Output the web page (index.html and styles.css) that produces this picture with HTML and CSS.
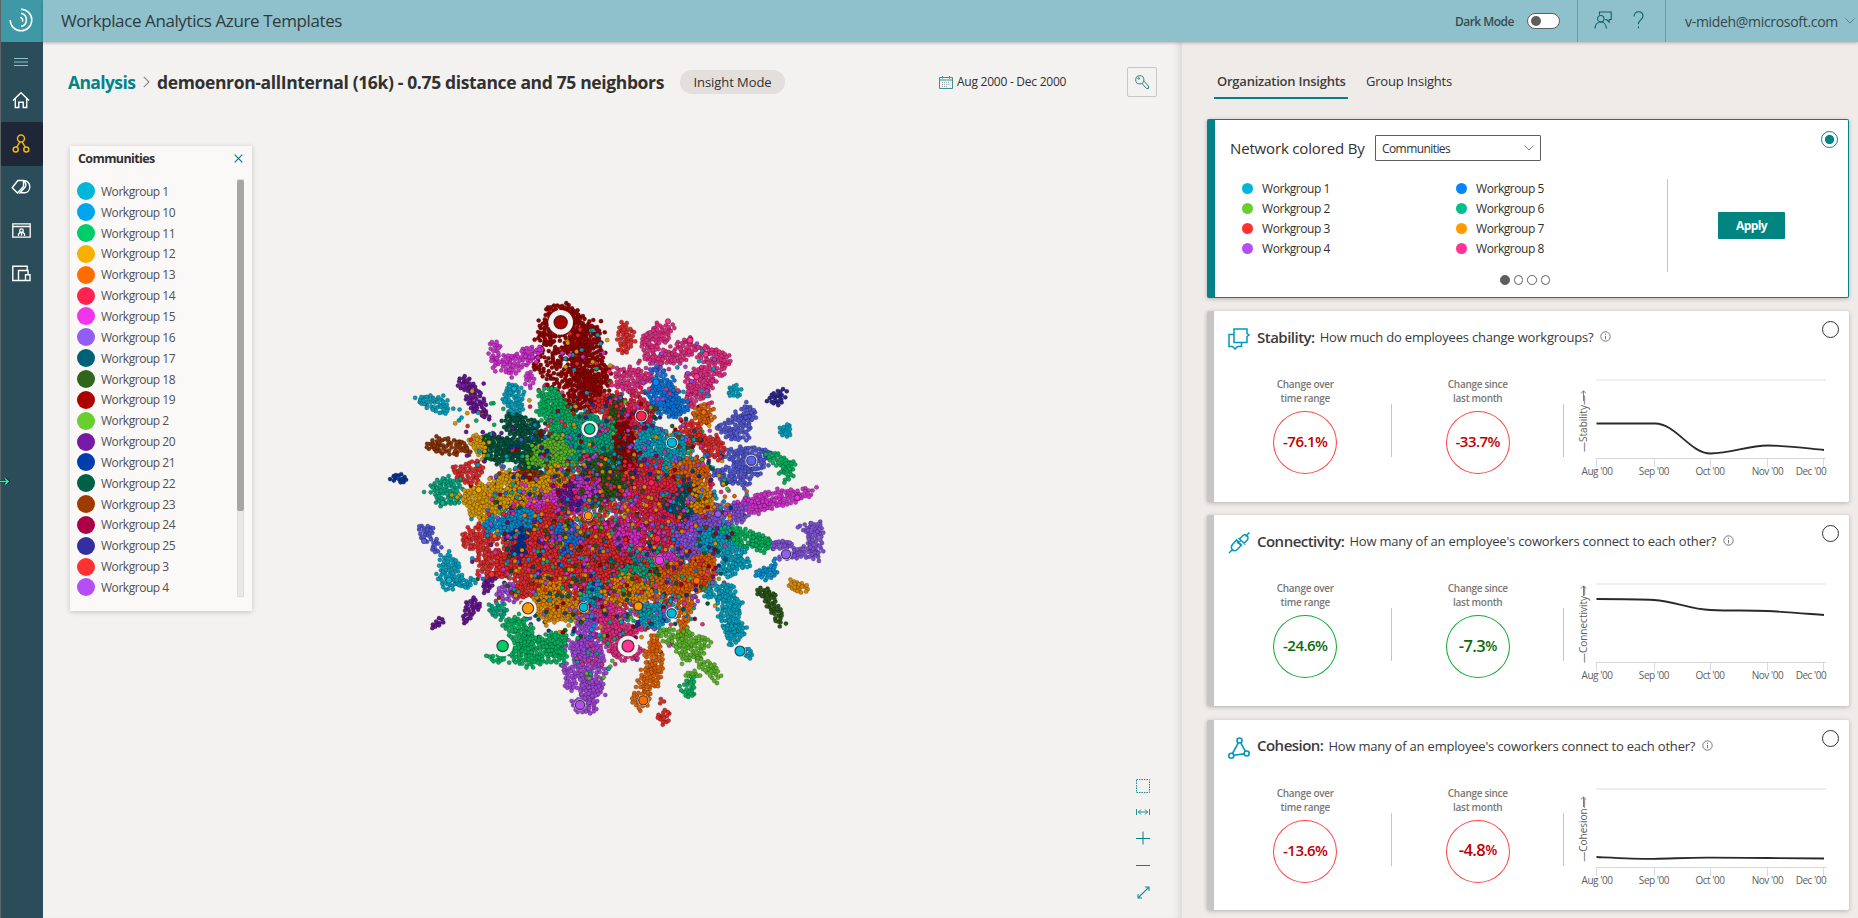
FILE: index.html
```html
<!DOCTYPE html>
<html lang="en">
<head>
<meta charset="utf-8">
<title>Workplace Analytics Azure Templates</title>
<link rel="stylesheet" href="styles.css">
</head>
<body>
<div class="app">
  <nav class="rail">
    <div class="logo"><svg width="24" height="24" viewBox="0 0 24 24" fill="none" stroke="#fff" stroke-width="1.500"><path d="M12 1.200A10.800 10.800 0 1 1 1.200 12"/><path d="M12 5.200A6.800 6.800 0 0 1 12 18.500"/><path d="M11 9.500A2.600 2.600 0 0 1 13.300 13.500"/></svg></div>
    <div class="burger"><svg width="14" height="8" viewBox="0 0 14 8" stroke="#8fc1cc"><path d="M0 .5h14M0 4h14M0 7.500h14"/></svg></div>
    <div class="nav-item"><svg width="18" height="18" viewBox="0 0 18 18" fill="none" stroke="#fff" stroke-width="1.400"><path d="M1 9.500 9 1.800l8 7.700M3.300 7.700v8.800h3.500v-5.300h4.400v5.300h3.500V7.700"/></svg></div>
    <div class="nav-item active"><svg width="18" height="19" viewBox="0 0 18 19" fill="none" stroke="#f2b50c" stroke-width="1.500"><circle cx="9" cy="4.500" r="3.500"/><circle cx="3.700" cy="15.500" r="2.500"/><circle cx="14.300" cy="15.500" r="2.500"/><path d="M7.800 8 4.800 13.200M10.200 8l3 5.200"/></svg></div>
    <div class="nav-item"><svg width="20" height="16" viewBox="0 0 20 16" fill="none" stroke="#fff" stroke-width="1.400"><path d="M6.800 1.500h5.700v6L6.500 14 1.200 8.700zM12.500 1.500c3.700 0 6.300 2.700 6.300 6.200s-2.300 6-5.300 6h-4.500l5-5.500c1.300-1.700.8-4.500-1.500-6.700"/></svg></div>
    <div class="nav-item"><svg width="19" height="15" viewBox="0 0 19 15" fill="none" stroke="#fff" stroke-width="1.300"><path d="M.8.800h17.400v13.400H.8zM.8 3.500h17.400"/><circle cx="9.500" cy="7.700" r="1.800"/><path d="M6.500 13V11l1.500-1.500h3l1.500 1.500v2M9.500 10.200v2.500"/></svg></div>
    <div class="nav-item"><svg width="19" height="17" viewBox="0 0 19 17" fill="none" stroke="#fff" stroke-width="1.400"><path d="M6.500 15.500H.8V1.200h14.400V5.200M6.500 15.500V5.500h9.500v4M6.500 15.500H18V9.700h-4.500v5.500"/></svg></div>
    <svg class="edge-arrow" width="10" height="9" viewBox="0 0 10 9" fill="none"><path d="M0 4.500h8M5 1.500l3.300 3L5 7.500" stroke="#0b2028" stroke-width="3"/><path d="M0 4.500h8M5 1.500l3.300 3L5 7.500" stroke="#1ff7b0" stroke-width="1.300"/></svg>
  </nav>
  <div class="page">
    <header class="top">
      <h1>Workplace Analytics Azure Templates</h1>
      <span class="dark">Dark Mode</span>
      <span class="toggle"><i></i></span>
      <div class="top-icons">
        <svg width="18" height="18" viewBox="0 0 18 18" fill="none" stroke="#0b5f68" stroke-width="1.100"><path d="M5.500 3.800V1h11.700v7.500h-2v2.700l-2.700-2.700H11"/><circle cx="6.800" cy="7.700" r="3.200"/><path d="M1 17.500c.2-4 2.800-6.500 5.800-6.500s5.400 2.500 5.600 6.500"/></svg>
        <svg width="11" height="18" viewBox="0 0 11 18" fill="none" stroke="#0b5f68" stroke-width="1.100"><path d="M1 5.500C1 2.500 3 .800 5.500.800S10 2.500 10 5.200c0 3.300-4.500 4-4.500 7.300v.7M5.500 15.500v1.700"/></svg>
      </div>
      <div class="user"><span>v-mideh@microsoft.com</span><svg width="10" height="6" viewBox="0 0 10 6" fill="none" stroke="#5b7f88"><path d="M.5.500 5 5 9.500.5"/></svg></div>
    </header>
    <div class="body">
      <main class="main">
        <div class="crumbs">
          <a class="crumb-link">Analysis</a>
          <svg class="crumb-sep" width="7" height="12" viewBox="0 0 7 12" fill="none" stroke="#8a8886" stroke-width="1.100"><path d="M.8.800 6 6 .8 11.200"/></svg>
          <h2>demoenron-allInternal (16k) - 0.75 distance and 75 neighbors</h2>
          <span class="pill">Insight Mode</span>
          <span class="dates"><svg width="14" height="13" viewBox="0 0 14 13" fill="none" stroke="#3c9193"><path d="M.5 1.500h13v11H.5zM.5 4h13M3.500 0v2.500M10.500 0v2.500" /><path d="M3 6.500h8M3 8.500h8M3 10.500h6" stroke="#9aa9aa" stroke-dasharray="1 1"/></svg><span>Aug 2000 - Dec 2000</span></span>
          <span class="key"><svg width="14" height="14" viewBox="0 0 14 14" fill="none" stroke="#2c8184" stroke-width="1"><circle cx="4.800" cy="4.800" r="4.100"/><circle cx="3.700" cy="3.500" r=".8"/><path d="M8.700 6 13.500 11v2.500h-2L7 8.500"/></svg></span>
        </div>

        <section class="legend">
          <div class="legend-head"><h3>Communities</h3><svg width="9" height="9" viewBox="0 0 9 9" stroke="#038387" stroke-width="1.200"><path d="M.7.700l7.600 7.600M8.300.700.7 8.300"/></svg></div>
          <div class="legend-body">
            <ul>
              <li><i style="--c:#00b7d9"></i>Workgroup 1</li>
              <li><i style="--c:#00a5ee"></i>Workgroup 10</li>
              <li><i style="--c:#00cc6a"></i>Workgroup 11</li>
              <li><i style="--c:#f8b000"></i>Workgroup 12</li>
              <li><i style="--c:#ff6d00"></i>Workgroup 13</li>
              <li><i style="--c:#ff2450"></i>Workgroup 14</li>
              <li><i style="--c:#f035ec"></i>Workgroup 15</li>
              <li><i style="--c:#915df5"></i>Workgroup 16</li>
              <li><i style="--c:#006078"></i>Workgroup 17</li>
              <li><i style="--c:#31651b"></i>Workgroup 18</li>
              <li><i style="--c:#ab0000"></i>Workgroup 19</li>
              <li><i style="--c:#69cf2e"></i>Workgroup 2</li>
              <li><i style="--c:#761aa6"></i>Workgroup 20</li>
              <li><i style="--c:#003eae"></i>Workgroup 21</li>
              <li><i style="--c:#006048"></i>Workgroup 22</li>
              <li><i style="--c:#a03a00"></i>Workgroup 23</li>
              <li><i style="--c:#ab0045"></i>Workgroup 24</li>
              <li><i style="--c:#342ea0"></i>Workgroup 25</li>
              <li><i style="--c:#ff3131"></i>Workgroup 3</li>
              <li><i style="--c:#b54ff5"></i>Workgroup 4</li>
            </ul>
            <div class="scroll"><i></i></div>
          </div>
        </section>

        <canvas class="network" id="network" width="480" height="450"></canvas>

        <div class="tools">
          <svg width="14" height="14" viewBox="0 0 14 14" fill="none" stroke="#1b8f92"><path d="M.5.500h13v13H.5z" stroke-dasharray="1.500 1"/></svg>
          <svg width="14" height="6" viewBox="0 0 14 6" fill="none" stroke="#1b8f92"><path d="M.5 0v6M13.500 0v6M2 3h10M5 .500 2.500 3 5 5.500M9 .500 11.500 3 9 5.500"/></svg>
          <svg width="14" height="14" viewBox="0 0 14 14" fill="none" stroke="#038387"><path d="M7 .500v13M0 7.500h14"/></svg>
          <svg width="14" height="2" viewBox="0 0 14 2" fill="none" stroke="#038387"><path d="M0 .500h14"/></svg>
          <svg width="13" height="13" viewBox="0 0 13 13" fill="none" stroke="#1b8f92" stroke-width="1.100"><path d="M1 12 12 1M8 1h4v4M1 8v4h4"/></svg>
        </div>
      </main>

      <aside class="side">
        <div class="tabs"><span class="tab on">Organization Insights</span><span class="tab">Group Insights</span></div>

        <section class="card color-card">
          <div class="color-head">
            <span class="color-title">Network colored By</span>
            <span class="select">Communities<svg width="10" height="6" viewBox="0 0 10 6" fill="none" stroke="#8a8886"><path d="M.5.500 5 5 9.500.5"/></svg></span>
            <span class="radio on"></span>
          </div>
          <div class="color-body">
            <ul>
              <li><i style="--c:#00b7d9"></i>Workgroup 1</li>
              <li><i style="--c:#69cf2e"></i>Workgroup 2</li>
              <li><i style="--c:#ff3131"></i>Workgroup 3</li>
              <li><i style="--c:#b54ff5"></i>Workgroup 4</li>
            </ul>
            <ul>
              <li><i style="--c:#0a84fb"></i>Workgroup 5</li>
              <li><i style="--c:#00be90"></i>Workgroup 6</li>
              <li><i style="--c:#ff9b00"></i>Workgroup 7</li>
              <li><i style="--c:#ff3494"></i>Workgroup 8</li>
            </ul>
            <div class="apply-wrap"><button class="apply">Apply</button></div>
          </div>
          <div class="dots"><i class="on"></i><i></i><i></i><i></i></div>
        </section>

        <section class="card metric">
          <div class="m-head">
            <svg class="m-icon" width="22" height="22" viewBox="0 0 22 22" fill="none" stroke="#0099bc" stroke-width="1.500"><path d="M6 1h13v4.500l2.200 1.500L19 8.500V14.500H6zM6 6.500H1V18.500h3.500L7 21l2.500-2.500h4v-4"/></svg>
            <b>Stability:</b><span>How much do employees change workgroups?</span>
            <svg class="info" width="11" height="11" viewBox="0 0 11 11" fill="none" stroke="#797775"><circle cx="5.500" cy="5.500" r="4.700"/><path d="M5.500 5v3.300M5.500 2.700v1.200"/></svg>
            <i class="radio"></i>
          </div>
          <div class="m-body">
            <div class="stat"><span>Change over<br>time range</span><div class="ring bad">-76.1%</div></div>
            <div class="stat"><span>Change since<br>last month</span><div class="ring bad">-33.7%</div></div>
            <svg class="chart" width="285" height="110" viewBox="0 0 285 110"><path class="grid" d="M32 6H262"/><path class="axis" d="M32 84.500H262"/><path class="tick" d="M32.500 85v8M90.500 85v8M146.500 85v8M203.500 85v8M259.500 85v8"/><path class="line" d="M32.500 49.500H91C112 49.500 126 79.500 146.500 79.500C167 79.500 184 71.500 203.500 71.500C222 71.500 240 74 260 76"/><text class="ylab" x="0" y="0" transform="translate(23 49.500) rotate(-90)">—Stability—</text><path class="arrow" d="M19.500 17v10M17 19.500l2.500-2.700 2.500 2.700"/><text x="33" y="101">Aug '00</text><text x="90" y="101">Sep '00</text><text x="146" y="101">Oct '00</text><text x="203.500" y="101">Nov '00</text><text x="247" y="101">Dec '00</text></svg>
          </div>
        </section>

        <section class="card metric">
          <div class="m-head">
            <svg class="m-icon" width="22" height="22" viewBox="0 0 22 22" fill="none" stroke="#0099bc" stroke-width="1.500"><path d="M1 21l4-4M17.500 4.500l4-4M8.700 7.800 4.500 12.500c-1.500 2-1.300 4 0 5.200s3.500 1 5-.5l4-4.200zM8.800 9.500l4.400 4M10.500 6l7 6.500M11.500 7l3.200-3.300c1.500-1.400 3.500-1 4.500.2s1 3-.2 4.500L15.700 11.500M9.500 11.500l3-2.500"/></svg>
            <b>Connectivity:</b><span>How many of an employee's coworkers connect to each other?</span>
            <svg class="info" width="11" height="11" viewBox="0 0 11 11" fill="none" stroke="#797775"><circle cx="5.500" cy="5.500" r="4.700"/><path d="M5.500 5v3.300M5.500 2.700v1.200"/></svg>
            <i class="radio"></i>
          </div>
          <div class="m-body">
            <div class="stat"><span>Change over<br>time range</span><div class="ring good">-24.6%</div></div>
            <div class="stat"><span>Change since<br>last month</span><div class="ring good"><em>-7.3</em>%</div></div>
            <svg class="chart" width="285" height="110" viewBox="0 0 285 110"><path class="grid" d="M32 6H262"/><path class="axis" d="M32 84.500H262"/><path class="tick" d="M32.500 85v8M90.500 85v8M146.500 85v8M203.500 85v8M259.500 85v8"/><path class="line" d="M32.500 21C50 21 75 21 90 22C110 23 126 31.500 146.500 32C170 33 184 32 203.500 33C222 34 240 35.500 260 37"/><text class="ylab" x="0" y="0" transform="translate(23 46.500) rotate(-90)">—Connectivity—</text><path class="arrow" d="M19.500 8v10M17 10.500l2.500-2.700 2.500 2.700"/><text x="33" y="101">Aug '00</text><text x="90" y="101">Sep '00</text><text x="146" y="101">Oct '00</text><text x="203.500" y="101">Nov '00</text><text x="247" y="101">Dec '00</text></svg>
          </div>
        </section>

        <section class="card metric">
          <div class="m-head">
            <svg class="m-icon" width="22" height="22" viewBox="0 0 22 22" fill="none" stroke="#0099bc" stroke-width="1.600"><circle cx="11.500" cy="3.500" r="2.500"/><circle cx="3.300" cy="18.700" r="2.500"/><circle cx="18.700" cy="16.500" r="2.500"/><path d="M10.300 5.800 4.500 16.500M12.700 5.800l4.700 8.500M5.800 18.200l10.400-1.300"/></svg>
            <b>Cohesion:</b><span>How many of an employee's coworkers connect to each other?</span>
            <svg class="info" width="11" height="11" viewBox="0 0 11 11" fill="none" stroke="#797775"><circle cx="5.500" cy="5.500" r="4.700"/><path d="M5.500 5v3.300M5.500 2.700v1.200"/></svg>
            <i class="radio"></i>
          </div>
          <div class="m-body">
            <div class="stat"><span>Change over<br>time range</span><div class="ring bad">-13.6%</div></div>
            <div class="stat"><span>Change since<br>last month</span><div class="ring bad"><em>-4.8</em>%</div></div>
            <svg class="chart" width="285" height="110" viewBox="0 0 285 110"><path class="grid" d="M32 6H262"/><path class="axis" d="M32 84.500H262"/><path class="tick" d="M32.500 85v8M90.500 85v8M146.500 85v8M203.500 85v8M259.500 85v8"/><path class="line" d="M32.500 74C55 75 75 76 90 75.800C110 75.500 126 74.500 146.500 74.700C170 74.700 184 75 203.500 75C222 75 240 75.500 260 75.500"/><text class="ylab" x="0" y="0" transform="translate(23 47) rotate(-90)">—Cohesion—</text><path class="arrow" d="M19.500 14v10M17 16.500l2.500-2.700 2.500 2.700"/><text x="33" y="101">Aug '00</text><text x="90" y="101">Sep '00</text><text x="146" y="101">Oct '00</text><text x="203.500" y="101">Nov '00</text><text x="247" y="101">Dec '00</text></svg>
          </div>
        </section>
      </aside>
    </div>
  </div>
</div>
<script src="network.js"></script>
</body>
</html>
```
FILE: styles.css
```css
* { box-sizing: border-box; margin: 0; padding: 0; }
body { width: 1858px; height: 918px; overflow: hidden; font-family: "Open Sans", "Noto Sans", sans-serif; color: #323130; background: #f3f2f1; }
svg { display: block; flex: none; }
ul { list-style: none; }
h1, h2, h3 { font-size: inherit; font-weight: inherit; }
.app { display: flex; height: 918px; }

.rail { position: relative; width: 43px; flex: none; background: #2b4d5a; border-left: 1px solid #5d6566; }
.logo { height: 42px; background: #3f98a6; display: flex; align-items: center; justify-content: center; padding: 0 2px 2px 0; }
.burger { height: 36px; display: flex; align-items: center; justify-content: center; padding: 3px 2px 0 0; }
.nav-item { height: 44px; display: flex; align-items: center; justify-content: center; padding: 0 2px 1px 0; }
.nav-item.active { background: #1f2638; border-radius: 2px; }
.nav-item:nth-child(n+5) { height: 43px; }
.edge-arrow { position: absolute; left: -1px; top: 477px; }

.page { flex: 1; display: flex; flex-direction: column; min-width: 0; }
.top { position: relative; z-index: 2; height: 42px; flex: none; display: flex; align-items: center; background: #8fc1cc; box-shadow: 0 1px 3px rgba(0,0,0,.25); padding-left: 18px; }
.top h1 { font-size: 17px; font-weight: 450; letter-spacing: -.4px; flex: 1; color: #2f3a3d; padding-bottom: 2px; }
.dark { font-size: 12px; font-weight: 600; letter-spacing: -.55px; color: #3a4b50; width: 72px; }
.toggle { width: 33px; height: 16px; border: 1px solid #605e5c; border-radius: 8px; background: #fff; display: flex; align-items: center; padding-left: 3px; }
.toggle i { width: 10px; height: 10px; border-radius: 50%; background: #605e5c; }
.top-icons { margin-left: 17px; height: 42px; width: 89px; border-left: 1px solid #5f9fad; border-right: 1px solid #5f9fad; display: flex; align-items: center; gap: 21px; padding: 0 0 2px 16px; }
.user { width: 192px; display: flex; align-items: center; padding-left: 19px; gap: 7px; font-size: 14px; letter-spacing: -.31px; color: #36474c; }

.body { flex: 1; display: flex; min-height: 0; }
.main { position: relative; width: 1139px; flex: none; background: #f3f2f1; box-shadow: inset -8px 0 8px -6px rgba(0,0,0,.13); }
.crumbs { display: flex; align-items: center; height: 30px; margin: 25px 25px 0 25px; }
.crumb-link { font-size: 17.500px; font-weight: 700; letter-spacing: -.62px; color: #038387; width: 75px; }
.crumb-sep { margin-right: 7px; }
.crumbs h2 { font-size: 17.500px; font-weight: 700; letter-spacing: -.36px; width: 523px; white-space: nowrap; }
.pill { width: 105px; height: 24px; border-radius: 12px; background: #e3dfdd; font-size: 13px; letter-spacing: -.07px; line-height: 24px; text-align: center; }
.dates { margin-left: 154px; width: 188px; display: flex; align-items: center; gap: 4px; font-size: 12px; letter-spacing: -.25px; }
.dates span { padding-bottom: 1px; }
.key { width: 30px; height: 30px; border: 1px solid #c8c6c4; border-radius: 2px; display: flex; align-items: center; justify-content: center; }

.legend { position: relative; margin: 49px 0 0 27px; width: 182px; height: 465px; background: #faf9f8; box-shadow: 0 1px 5px rgba(0,0,0,.2); }
.legend-head { display: flex; justify-content: space-between; align-items: center; height: 27px; padding: 0 9px 2px 8px; }
.legend h3 { font-size: 12.500px; font-weight: 700; letter-spacing: -.6px; }
.legend-body { display: flex; justify-content: space-between; margin: 6px 8px 0 7px; }
.legend ul { padding-top: 2px; }
.legend li { display: flex; align-items: center; gap: 6px; height: 20.850px; font-size: 12px; letter-spacing: -.46px; color: #525050; }
.legend li i { width: 18px; height: 18px; border-radius: 50%; background: var(--c); }
.scroll { width: 7px; height: 418px; background: #e8e8e8; border: 1px solid #dcdcdc; }
.scroll i { display: block; width: 7px; height: 331px; margin-left: -1px; background: #a6a6a6; border-radius: 2px; }

.network { position: absolute; left: 337px; top: 248px; }
.tools { position: absolute; left: 1093px; top: 737px; display: flex; flex-direction: column; align-items: center; }
.tools svg:nth-child(2) { margin-top: 16px; }
.tools svg:nth-child(3) { margin-top: 16px; }
.tools svg:nth-child(4) { margin-top: 20px; }
.tools svg:nth-child(5) { margin-top: 19px; }

.side { flex: 1; background: #eeebe8; padding: 27px 9px 0 25px; }
.tabs { display: flex; gap: 18px; height: 30px; margin-left: 7px; font-size: 13px; }
.tab { letter-spacing: -.2px; height: 30px; line-height: 24px; }
.tab.on { font-weight: 600; width: 134px; padding-left: 3px; border-bottom: 2px solid #038387; letter-spacing: -.24px; color: #403e3d; }

.card { width: 642px; background: #fff; border-radius: 2px; box-shadow: 0 1px 4px rgba(0,0,0,.25); }
.color-card { margin-top: 20px; height: 179px; border: 1px solid #038387; border-left-width: 8px; }
.color-head { display: flex; height: 56px; align-items: center; padding: 0 10px 0 15px; }
.color-title { font-size: 15px; letter-spacing: -.16px; width: 145px; }
.select { width: 166px; height: 26px; border: 1px solid #605e5c; border-radius: 1px; display: flex; align-items: center; justify-content: space-between; padding: 0 6px; font-size: 12px; letter-spacing: -.58px; }
.radio { width: 17px; height: 17px; border: 1px solid #323130; border-radius: 50%; margin-left: auto; }
.radio.on { border-color: #038387; margin-top: -18px; background: radial-gradient(circle, #038387 4.200px, #fff 4.900px); }
.color-body { display: flex; height: 96px; }
.color-body ul { width: 214px; padding: 2px 0 0 27px; }
.color-body li { display: flex; align-items: center; height: 20px; gap: 9px; font-size: 12px; letter-spacing: -.44px; color: #323130; font-weight: 500; }
.color-body li i { width: 11px; height: 11px; border-radius: 50%; background: var(--c); }
.apply-wrap { width: 180px; margin-left: 24px; border-left: 1px solid #c8c6c4; height: 93px; margin-top: 3px; padding: 33px 0 0 50px; }
.apply { width: 67px; height: 27px; border: 0; border-radius: 1px; background: #008580; color: #fff; font: 700 12px "Open Sans", sans-serif; letter-spacing: -.59px; }
.dots { display: flex; gap: 4px; padding: 3px 0 0 285px; }
.dots i { width: 9.500px; height: 9.500px; border: 1px solid #605e5c; border-radius: 50%; }
.dots i.on { background: #605e5c; }

.metric { margin-top: 13.800px; height: 190.600px; border-left: 7px solid #c8c6c4; }
.metric:nth-of-type(2) { margin-top: 13px; }
.m-head { display: flex; height: 52px; align-items: center; padding: 0 10px 0 14px; }
.m-icon { margin: 4px 7px 0 0; }
.m-head b { font-size: 15px; font-weight: 600; letter-spacing: -.52px; color: #3b3a39; padding-bottom: 1px; }
.m-head span { font-size: 13px; letter-spacing: -.2px; margin: 0 7px 0 5px; color: #3b3a39; }
.info { margin-bottom: 1px; }
.m-head .radio { margin-top: -15px; }
.m-body { display: flex; padding: 14px 0 0 5px; }
.stat { position: relative; width: 173px; height: 97px; display: flex; flex-direction: column; align-items: center; }
.stat span { font-size: 10px; font-weight: 600; line-height: 14px; letter-spacing: -.3px; color: #7a7876; text-align: center; }
.stat::after { content: ""; position: absolute; right: 0; top: 27px; height: 53px; border-right: 1px solid #c8c6c4; }
.ring { width: 64px; height: 64px; margin-top: 6px; border: 1px solid; border-radius: 50%; display: flex; align-items: center; justify-content: center; font-size: 15px; font-weight: 600; letter-spacing: -.55px; padding-bottom: 3px; }
.ring em { font-style: normal; font-size: 16.500px; }
.bad { border-color: #ff4343; color: #c00000; }
.good { border-color: #0cab2e; color: #0b6a0b; }
.ring:has(em) { font-size: 14px; }
.chart { margin-top: -3px; overflow: visible; }
.chart text { font-size: 10px; letter-spacing: -.45px; fill: #605e5c; text-anchor: middle; }
.chart .ylab { letter-spacing: 0; }
.grid { stroke: #f0efee; stroke-width: 2; }
.axis { stroke: #d8d6d4; }
.tick { stroke: #d3dcec; }
.line { stroke: #2b2a29; stroke-width: 1.800; fill: none; }
.arrow { stroke: #605e5c; fill: none; stroke-width: .8; }
```
FILE: network.js
```js
// Community network. Cluster coordinates are in thirds of a pixel.
const canvas = document.getElementById('network');
const ctx = canvas.getContext('2d');
ctx.scale(1 / 3, 1 / 3);

let seed = 20001;
const rnd = () => {
  seed = (seed * 1664525 + 1013904223) >>> 0;
  return seed / 4294967296;
};

const C = {
  cyan: '#00b7d9', sky: '#00a5ee', green: '#00cc6a', gold: '#f8b000', orange: '#ff6d00',
  crim: '#ff2450', mag: '#f035ec', vio: '#915df5', deep: '#006078', olive: '#31651b',
  dred: '#ab0000', lime: '#69cf2e', purp: '#761aa6', navy: '#003eae', pine: '#006048',
  brown: '#a03a00', wine: '#ab0045', indigo: '#342ea0', red: '#ff3131', orchid: '#b54ff5',
  blue: '#0a84fb', teal: '#00be90', amber: '#ff9b00', pink: '#ff3494', peri: '#5b63f0'
};
const names = Object.keys(C);

const shade = hex => {
  const n = parseInt(hex.slice(1), 16);
  const f = k => Math.round(((n >> k) & 255) * 0.86);
  return `rgb(${f(16)},${f(8)},${f(0)})`;
};

function dot(x, y, name, r = 6.3) {
  ctx.beginPath();
  ctx.arc(x, y, r, 0, 7);
  ctx.fillStyle = shade(C[name]);
  ctx.fill();
  ctx.lineWidth = 1.7;
  ctx.strokeStyle = 'rgba(0,0,0,.42)';
  ctx.stroke();
}

// Members keep a minimum distance inside a group, so the group fills evenly
function cluster(name, cx, cy, rx, ry, rot = 0, density = 1) {
  const a = rot * Math.PI / 180;
  const n = Math.round(rx * ry * 3.14 / 42 * density);
  const p1 = rnd() * 6, p2 = rnd() * 6;
  const placed = [];
  for (let i = 0; i < n; i++) {
    for (let k = 0; k < 6; k++) {
      const t = rnd() * 6.283;
      const edge = 1.12 + 0.13 * Math.sin(3 * t + p1) + 0.1 * Math.sin(5 * t + p2);
      const q = Math.pow(rnd(), 0.52) * edge * (rnd() < 0.07 ? 1.3 : 1);
      const u = Math.cos(t) * q * rx, v = Math.sin(t) * q * ry;
      const x = cx + u * Math.cos(a) - v * Math.sin(a), y = cy + u * Math.sin(a) + v * Math.cos(a);
      if (placed.some(p => (p[0] - x) ** 2 + (p[1] - y) ** 2 < 52)) continue;
      placed.push([x, y]);
      dot(x, y, name);
      break;
    }
  }
}

function mix(n, cx, cy, rx, ry, pool) {
  for (let i = 0; i < n; i++) {
    const t = rnd() * 6.283, q = Math.sqrt(rnd());
    dot(cx + Math.cos(t) * q * rx, cy + Math.sin(t) * q * ry, pool[Math.floor(rnd() * pool.length)]);
  }
}

mix(3600, 690, 690, 330, 310, ['red', 'crim', 'mag', 'orange', 'gold', 'teal', 'green', 'cyan', 'vio', 'red', 'crim', 'amber']);
mix(620, 680, 680, 430, 440, names);

[
  ['dred', 540, 75, 48, 28], ['dred', 500, 130, 24, 34], ['dred', 585, 130, 34, 60, -20], ['dred', 535, 225, 65, 60, 0, .42],
  ['dred', 630, 205, 42, 90, -10], ['dred', 610, 310, 48, 50],
  ['mag', 342, 190, 14, 36], ['mag', 405, 220, 42, 26, -20], ['mag', 455, 185, 28, 14], ['mag', 450, 270, 12, 22],
  ['purp', 262, 288, 30, 18, 30], ['purp', 292, 345, 22, 34, -35],
  ['cyan', 165, 342, 44, 20, 22], ['cyan', 403, 328, 28, 44],
  ['green', 515, 345, 36, 44, -20], ['green', 545, 390, 32, 60, -20], ['teal', 630, 450, 80, 62],
  ['pine', 420, 402, 46, 24], ['pine', 350, 475, 44, 34, 40], ['pine', 440, 475, 54, 58],
  ['lime', 515, 490, 56, 38, -15], ['olive', 690, 550, 62, 56], ['olive', 650, 600, 46, 38],
  ['brown', 208, 470, 56, 21, 5], ['brown', 440, 560, 38, 18], ['gold', 295, 465, 16, 32, -20],
  ['red', 265, 548, 40, 30], ['navy', 58, 565, 22, 12],
  ['teal', 200, 605, 40, 36], ['gold', 370, 610, 105, 40, -8], ['gold', 310, 665, 38, 28], ['gold', 520, 580, 40, 34],
  ['mag', 530, 645, 74, 32], ['purp', 580, 615, 36, 32], ['mag', 620, 590, 34, 28],
  ['red', 738, 145, 22, 38], ['pink', 808, 170, 22, 42], ['pink', 845, 130, 26, 28, -40], ['pink', 855, 205, 30, 18],
  ['pink', 910, 180, 40, 24, -38], ['pink', 1000, 200, 42, 24, 15], ['pink', 755, 268, 50, 32],
  ['pink', 960, 280, 38, 42], ['pink', 935, 320, 14, 30], ['pink', 1020, 245, 14, 12], ['peri', 832, 240, 20, 10],
  ['blue', 850, 315, 38, 54, -15], ['blue', 890, 350, 34, 28],
  ['red', 680, 345, 40, 28], ['olive', 712, 365, 20, 40], ['crim', 770, 370, 44, 48], ['orange', 972, 370, 24, 25],
  ['cyan', 1065, 303, 18, 16], ['peri', 1068, 410, 46, 32, -20], ['peri', 1105, 370, 16, 24],
  ['peri', 1105, 505, 54, 32], ['peri', 1065, 555, 54, 26], ['indigo', 1192, 322, 26, 18, -30], ['cyan', 1218, 422, 17, 17, 20],
  ['green', 1195, 510, 34, 16, 25], ['green', 1225, 540, 17, 26, 20], ['mag', 1190, 625, 84, 23, -8], ['mag', 1110, 650, 46, 18],
  ['vio', 1020, 675, 74, 28], ['red', 930, 435, 40, 32], ['red', 995, 470, 34, 26, 20],
  ['cyan', 835, 490, 70, 62], ['orange', 920, 555, 58, 40, -20], ['deep', 895, 635, 50, 42], ['amber', 960, 630, 34, 34],
  ['dred', 738, 480, 24, 78, -10], ['crim', 805, 590, 60, 72],
  ['peri', 138, 728, 22, 24], ['peri', 168, 770, 11, 18], ['cyan', 210, 848, 30, 46], ['cyan', 255, 880, 26, 13],
  ['red', 295, 745, 40, 32], ['red', 350, 820, 52, 38], ['red', 480, 740, 88, 70], ['red', 500, 810, 115, 80],
  ['red', 640, 810, 105, 85], ['red', 690, 760, 60, 60], ['orchid', 385, 905, 28, 24], ['red', 435, 900, 34, 20],
  ['sky', 400, 700, 70, 32, -12], ['navy', 410, 735, 26, 14], ['navy', 420, 780, 18, 18], ['blue', 560, 745, 35, 42],
  ['purp', 325, 885, 12, 24, 35], ['purp', 272, 960, 18, 34, 30], ['purp', 175, 1000, 22, 9, -40],
  ['teal', 355, 962, 23, 18], ['amber', 510, 930, 45, 60], ['amber', 570, 960, 50, 36, 0, .5],
  ['green', 470, 1088, 76, 34], ['green', 430, 1050, 32, 32], ['green', 350, 1103, 26, 12], ['green', 405, 1003, 32, 18], ['green', 525, 1060, 34, 32],
  ['cyan', 640, 925, 28, 44], ['pink', 690, 990, 36, 58], ['pink', 710, 1040, 28, 48],
  ['orchid', 620, 1020, 24, 56], ['orchid', 605, 1075, 36, 26], ['orchid', 635, 1130, 36, 74], ['orchid', 570, 1165, 18, 32], ['orchid', 615, 1245, 30, 24], ['orchid', 628, 1195, 26, 34],
  ['mag', 835, 815, 62, 26], ['crim', 820, 715, 68, 52], ['mag', 740, 730, 42, 38],
  ['vio', 945, 750, 58, 52], ['cyan', 1030, 765, 62, 42, 25], ['cyan', 1050, 840, 24, 18], ['cyan', 1092, 818, 17, 13],
  ['green', 1105, 743, 62, 22, 18], ['green', 1145, 765, 25, 20], ['vio', 1305, 755, 20, 44], ['vio', 1290, 712, 34, 12], ['vio', 1260, 790, 52, 15, -8],
  ['vio', 1205, 765, 28, 13], ['sky', 1158, 850, 27, 16], ['sky', 1180, 825, 7, 20, 20], ['amber', 1255, 890, 26, 15, 20],
  ['olive', 1158, 908, 26, 11, 10], ['olive', 1182, 955, 15, 50, -28],
  ['teal', 780, 850, 48, 42], ['orange', 900, 865, 80, 42], ['orange', 970, 835, 34, 38], ['orange', 912, 950, 20, 64],
  ['amber', 745, 900, 60, 36], ['cyan', 825, 975, 46, 34], ['cyan', 1015, 905, 36, 22, 20], ['cyan', 1052, 960, 27, 56], ['cyan', 1062, 1030, 24, 30],
  ['cyan', 1105, 1090, 11, 18, -20], ['lime', 930, 1068, 40, 38], ['lime', 985, 1135, 36, 17, 40], ['lime', 865, 1035, 28, 20, 0, .6],
  ['lime', 935, 1155, 18, 9], ['green', 925, 1195, 18, 25], ['pink', 742, 1090, 38, 18], ['pink', 760, 1020, 22, 13],
  ['orange', 825, 1100, 22, 50], ['orange', 806, 1165, 25, 40, 20], ['orange', 784, 1230, 26, 24], ['red', 852, 1280, 14, 20], ['red', 846, 1232, 9, 8]
].forEach(c => cluster(...c));

// Stray members scattered over neighbouring groups
mix(950, 690, 690, 370, 370, names);
mix(260, 700, 700, 240, 220, ['crim', 'red', 'mag', 'amber', 'olive']);
mix(26, 620, 200, 80, 110, ['red', 'cyan', 'teal', 'mag', 'gold']);
mix(26, 640, 1090, 60, 90, ['green', 'lime', 'teal', 'pink', 'cyan']);
mix(40, 900, 240, 130, 110, ['pink', 'pink', 'red', 'cyan', 'orchid']);
mix(30, 310, 400, 90, 130, ['cyan', 'red', 'purp', 'gold', 'green']);

// Group hubs: x, y, radius, halo radius
[
  ['dred', 542, 97, 20, 37], ['teal', 629, 417, 16, 25], ['crim', 784, 378, 15, 19], ['cyan', 876, 458, 14, 18],
  ['peri', 1114, 512, 14, 18], ['amber', 625, 677, 12, 15], ['amber', 444, 955, 17, 26], ['green', 368, 1068, 17, 31],
  ['cyan', 611, 952, 13, 16], ['orchid', 600, 1245, 14, 17], ['pink', 744, 1068, 18, 31], ['orange', 790, 1231, 14, 17],
  ['amber', 775, 949, 13, 13], ['cyan', 875, 970, 14, 18], ['cyan', 1080, 1083, 15, 18], ['vio', 1218, 793, 14, 17],
  ['mag', 838, 811, 13, 15], ['vio', 1014, 672, 10, 0], ['mag', 1252, 623, 8, 0], ['purp', 250, 287, 8, 0],
  ['cyan', 402, 296, 8, 0], ['gold', 296, 599, 9, 0], ['cyan', 207, 871, 9, 0], ['peri', 132, 753, 8, 0], ['pink', 864, 94, 8, 0],
  ['pink', 950, 260, 9, 0], ['blue', 828, 277, 10, 0], ['teal', 188, 639, 8, 0], ['red', 335, 853, 9, 0], ['crim', 832, 746, 10, 0],
  ['pink', 930, 151, 9, 0], ['pink', 977, 193, 9, 0], ['orange', 950, 872, 10, 0], ['crim', 814, 578, 9, 0], ['orange', 971, 367, 8, 0]
].forEach(([name, x, y, r, halo]) => {
  if (halo) {
    ctx.beginPath(); ctx.arc(x, y, halo, 0, 7);
    ctx.fillStyle = '#f3f2f1'; ctx.fill();
  }
  ctx.beginPath(); ctx.arc(x, y, r, 0, 7);
  ctx.fillStyle = C[name]; ctx.fill();
  ctx.lineWidth = halo ? 3.5 : 2; ctx.strokeStyle = 'rgba(20,20,20,.75)'; ctx.stroke();
});
```
